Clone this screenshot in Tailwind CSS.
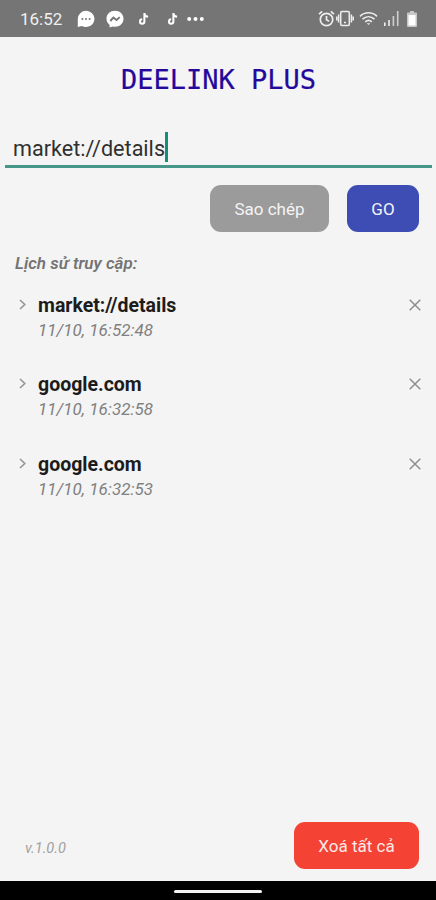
<!DOCTYPE html>
<html lang="vi">
<head>
    <meta charset="UTF-8">
    <meta name="viewport" content="width=device-width, initial-scale=1.0">
    <title>DEELINK PLUS</title>
    <script src="https://cdn.jsdelivr.net/npm/@tailwindcss/browser@4"></script>
</head>
<body class="bg-[#f4f4f4] font-[Roboto,sans-serif]">
    <div class="w-[436px] h-[900px] flex flex-col overflow-hidden">
        <!-- Status bar -->
        <header class="h-[37px] shrink-0 bg-[#757575] text-[#f0f0f0] flex items-center pl-5 pr-[19px]">
            <span class="w-[57px] pt-[2px] text-[17px] leading-none whitespace-nowrap">16:52</span>
            <svg class="w-[18px] h-[18px]" viewBox="0 0 18 18">
                <path d="M9 .8a8.500 8.100 0 1 1-4.200 15.200L.8 17V9A8.200 8.200 0 0 1 9 .8z" fill="#fff"/>
                <g fill="#757575"><circle cx="5.4" cy="9" r="1"/><circle cx="9" cy="9" r="1"/><circle cx="12.600" cy="9" r="1"/></g>
            </svg>
            <svg class="w-[18px] h-[18px] ml-[11px]" viewBox="0 0 18 18">
                <path d="M9 .8c4.800 0 8.500 3.400 8.500 8s-3.700 8-8.500 8c-.9 0-1.800-.1-2.600-.4L3.600 17.500v-2.600C1.700 13.400.5 11.300.5 8.800c0-4.600 3.700-8 8.500-8z" fill="#fff"/>
                <path d="M4.300 11 7.400 7.500l3.100 2.600 3.200-3" fill="none" stroke="#757575" stroke-width="1.900"/>
            </svg>
            <svg class="w-[12px] h-[14px] ml-[14px]" viewBox="0 0 12 14">
                <path d="M6.400 1v8.600a2.200 2.200 0 1 1-2.200-2.300M6.400 1.500c.3 1.900 1.700 3 3.700 3.200" fill="none" stroke="#fff" stroke-width="2"/>
            </svg>
            <svg class="w-[12px] h-[14px] ml-[17px]" viewBox="0 0 12 14">
                <path d="M6.400 1v8.600a2.200 2.200 0 1 1-2.200-2.300M6.400 1.500c.3 1.900 1.700 3 3.700 3.200" fill="none" stroke="#fff" stroke-width="2"/>
            </svg>
            <svg class="w-[17px] h-[6px] ml-2" viewBox="0 0 17 6" fill="#fff">
                <circle cx="2.200" cy="3" r="2"/><circle cx="8.500" cy="3" r="2"/><circle cx="14.800" cy="3" r="2"/>
            </svg>
            <div class="ml-auto flex items-center">
                <svg class="w-[17px] h-[17px]" viewBox="0 0 17 17" fill="none" stroke="#eee" stroke-width="1.700">
                    <circle cx="8.500" cy="9.500" r="6.200"/><path d="M8.500 6v3.800l2.600 1.600M1 4.200 4.200 1.400M16 4.200l-3.200-2.800"/>
                </svg>
                <svg class="w-[18px] h-[17px] ml-px" viewBox="0 0 18 17" fill="none" stroke="#eee" stroke-width="1.500">
                    <rect x="4.700" y="1.500" width="8.600" height="14" rx="1.200"/><path d="M2.600 4.500v8M15.400 4.500v8M.8 6.500v4M17.200 6.500v4M8 12.500h2"/>
                </svg>
                <svg class="w-[19px] h-[15px] ml-[5px]" viewBox="0 0 19 15" fill="none" stroke="#eee" stroke-width="1.600">
                    <path d="M1 5.300c5-4.700 12-4.700 17 0M3.500 8.200c3.600-3.300 8.400-3.300 12 0M6.200 10.900c2-1.800 4.600-1.800 6.600 0"/><path d="M7.700 12.300h3.600L9.500 14z" fill="#eee" stroke="none"/>
                </svg>
                <svg class="w-[15px] h-[15px] ml-[6px]" viewBox="0 0 15 15" fill="#eee">
                    <path d="M0 11.500h1.600V15H0zM4.200 9h1.600v6H4.200z"/><path d="M8.600 5h1.600v10H8.600zM12.900 0h1.600v15h-1.600z" opacity=".75"/>
                </svg>
                <svg class="w-[10px] h-[16px] ml-2" viewBox="0 0 10 16">
                    <path d="M3 0h4v1.500h2q1 0 1 1V15q0 1-1 1H1q-1 0-1-1V2.500q0-1 1-1h2z" fill="#c8c8c8"/><path d="M1.500 4h7v10.500h-7z" fill="#fff"/>
                </svg>
            </div>
        </header>

        <h1 class="mt-[27px] h-8 shrink-0 pl-px text-center text-[27px] leading-8 text-[#24089c] whitespace-nowrap font-['DejaVu_Sans_Mono',monospace] [-webkit-text-stroke:0.2px_#24089c]">DEELINK PLUS</h1>

        <!-- Link input -->
        <div class="mt-[35px] ml-[5px] mr-1 h-[37px] shrink-0 pl-2 flex border-b-[3px] border-[#46968a]">
            <span class="h-[34px] pt-px text-[21.6px] leading-[34px] text-[#303030]">market://details</span>
            <span class="mt-px w-[3px] h-[30px] bg-[#159078]"></span>
        </div>

        <div class="mt-[17px] mr-[17px] flex justify-end gap-[18px] shrink-0 text-[17px] text-[#f4f4f4]">
            <button class="w-[119px] h-[47px] pt-[2px] rounded-[11px] bg-[#9b9b9b]">Sao chép</button>
            <button class="w-[72px] h-[47px] pt-[2px] rounded-[11px] bg-[#3d4db4]">GO</button>
        </div>

        <!-- History -->
        <h2 class="mt-5 ml-[15px] h-[22px] shrink-0 text-[17px] leading-[22px] font-semibold italic text-[#747474]">Lịch sử truy cập:</h2>
        <ul class="mt-[19px] flex-1">
            <li class="h-[79px] flex items-start pl-[19px] pr-[15px]">
                <svg class="w-[7px] h-[11px] mt-[6px]" viewBox="0 0 7 11" fill="none" stroke="#959595" stroke-width="1.600"><path d="m1 1 4.800 4.500L1 10"/></svg>
                <div class="ml-3 flex-1">
                    <div class="pt-px text-[19.5px] leading-[24px] font-bold text-[#1c1c1c]">market://details</div>
                    <div class="text-[17px] leading-[24px] italic text-[#808080]">11/10, 16:52:48</div>
                </div>
                <svg class="w-3 h-3 mt-[6px]" viewBox="0 0 12 12" stroke="#8e8e8e" stroke-width="1.500"><path d="m.7.7 10.600 10.600M11.300.7.7 11.300"/></svg>
            </li>
            <li class="h-[80px] flex items-start pl-[19px] pr-[15px]">
                <svg class="w-[7px] h-[11px] mt-[6px]" viewBox="0 0 7 11" fill="none" stroke="#959595" stroke-width="1.600"><path d="m1 1 4.800 4.500L1 10"/></svg>
                <div class="ml-3 flex-1">
                    <div class="pt-px text-[19.5px] leading-[24px] font-bold text-[#1c1c1c]">google.com</div>
                    <div class="text-[17px] leading-[24px] italic text-[#808080]">11/10, 16:32:58</div>
                </div>
                <svg class="w-3 h-3 mt-[6px]" viewBox="0 0 12 12" stroke="#8e8e8e" stroke-width="1.500"><path d="m.7.7 10.600 10.600M11.300.7.7 11.300"/></svg>
            </li>
            <li class="h-[79px] flex items-start pl-[19px] pr-[15px]">
                <svg class="w-[7px] h-[11px] mt-[6px]" viewBox="0 0 7 11" fill="none" stroke="#959595" stroke-width="1.600"><path d="m1 1 4.800 4.500L1 10"/></svg>
                <div class="ml-3 flex-1">
                    <div class="pt-px text-[19.5px] leading-[24px] font-bold text-[#1c1c1c]">google.com</div>
                    <div class="text-[17px] leading-[24px] italic text-[#808080]">11/10, 16:32:53</div>
                </div>
                <svg class="w-3 h-3 mt-[6px]" viewBox="0 0 12 12" stroke="#8e8e8e" stroke-width="1.500"><path d="m.7.7 10.600 10.600M11.300.7.7 11.300"/></svg>
            </li>
        </ul>

        <footer class="mb-3 h-[47px] shrink-0 pl-[25px] pr-[17px] flex items-center justify-between">
            <span class="mt-[6px] text-[14.5px] italic text-[#a0a0a0]">v.1.0.0</span>
            <button class="w-[125px] h-[47px] pt-[2px] rounded-[11px] bg-[#f44235] text-[17px] text-[#fbe9e7]">Xoá tất cả</button>
        </footer>

        <!-- Gesture bar -->
        <div class="h-[19px] shrink-0 bg-black flex justify-center pt-[9px]">
            <div class="w-[88px] h-[3px] rounded-full bg-[#f2f2f2]"></div>
        </div>
    </div>
</body>
</html>
